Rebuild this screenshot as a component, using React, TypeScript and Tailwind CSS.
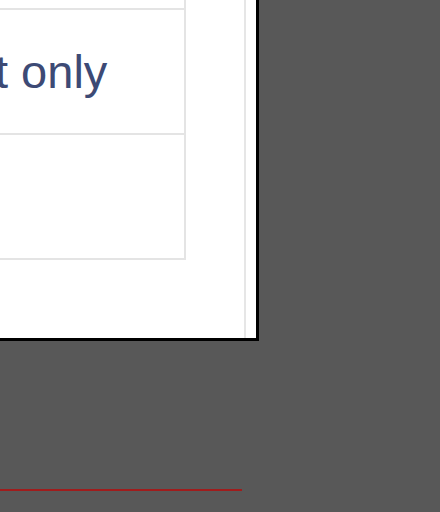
export default function App() {
  return (
    <div className="relative h-[512px] w-[440px] overflow-hidden bg-[#585858]" style={{ fontFamily: '"Liberation Sans", Arial, sans-serif' }}>
      {/* Panel */}
      <div className="flex h-[341px] w-[259px] items-start border-b-[3px] border-r-[3px] border-black bg-white">
        {/* Table */}
        <div className="flex w-[186px] flex-col border-r-2 border-[#e4e4e4] pt-[8px]">
          <div className="h-[2px] bg-[#e4e4e4]" />
          <div className="flex h-[125px] items-center border-b-2 border-[#e4e4e4]">
            <span className="ml-[-5px] whitespace-nowrap text-[47px] leading-none text-[#3d4a75]">t only</span>
          </div>
          <div className="h-[125px] border-b-2 border-[#e4e4e4]" />
        </div>
        <div className="ml-[58px] h-full w-[2px] bg-[#e6e6e6]" />
      </div>

      {/* Red line */}
      <div className="mt-[148px] h-[2px] w-[242px] bg-[#a01c1c]" />
    </div>
  )
}
